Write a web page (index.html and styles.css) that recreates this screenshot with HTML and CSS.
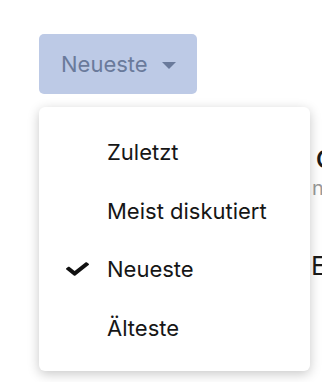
FILE: index.html
```html
<!DOCTYPE html>
<html lang="de">
<head>
    <meta charset="UTF-8">
    <meta name="viewport" content="width=device-width, initial-scale=1.0">
    <title>Sortierung</title>
    <link rel="stylesheet" href="styles.css">
</head>
<body>
    <div class="page">
        <button class="sort-button">
            <span>Neueste</span>
            <span class="caret"></span>
        </button>

        <!-- content behind the menu -->
        <div class="behind">
            <div class="behind-title">C</div>
            <div class="behind-sub">n</div>
            <div class="behind-next">E</div>
        </div>

        <ul class="sort-menu">
            <li class="sort-item"><span class="check"></span>Zuletzt</li>
            <li class="sort-item"><span class="check"></span>Meist diskutiert</li>
            <li class="sort-item selected">
                <span class="check">
                    <svg viewBox="0 0 512 512" width="23" height="18" preserveAspectRatio="none"><path d="M173.9 439.4l-166.4-166.4c-10-10-10-26.2 0-36.2l36.2-36.2c10-10 26.2-10 36.2 0L192 312.7 432.1 72.6c10-10 26.2-10 36.2 0l36.2 36.2c10 10 10 26.2 0 36.2l-294.4 294.4c-10 10-26.2 10-36.2 0z" fill="#111"/></svg>
                </span>Neueste
            </li>
            <li class="sort-item"><span class="check"></span>Älteste</li>
        </ul>
    </div>
</body>
</html>
```

FILE: styles.css
```css
body {
    margin: 0;
    background: #fff;
    font-family: Inter, "Noto Sans", sans-serif;
    overflow: hidden;
}

.page {
    position: relative;
    width: 322px;
    height: 382px;
    padding: 34px 0 0 39px;
    box-sizing: border-box;
}

.sort-button {
    display: flex;
    align-items: center;
    gap: 14px;
    height: 60px;
    padding: 0 21px 0 22px;
    border: none;
    border-radius: 5px;
    background: #bdcae6;
    color: #6a7a9b;
    font-family: inherit;
    font-size: 22px;
}
.caret {
    width: 0;
    height: 0;
    margin-top: 2px;
    border-left: 7px solid transparent;
    border-right: 7px solid transparent;
    border-top: 7px solid #6a7a9b;
}

/* Background content peeking out on the right */
.behind {
    margin: 52px 0 0 277px;
    white-space: nowrap;
    color: #1a1a1a;
}
.behind-title {
    font-size: 24px;
    font-weight: 600;
    line-height: 28px;
}
.behind-sub {
    margin-top: 2px;
    font-size: 20px;
    color: #9a9a9a;
    margin-left: -4px;
}
.behind-next {
    margin-top: 50px;
    font-size: 26px;
    margin-left: -5px;
}

.sort-menu {
    position: absolute;
    top: 107px;
    left: 39px;
    width: 271px;
    margin: 0;
    padding: 16px 0 14px;
    list-style: none;
    background: #fff;
    border-radius: 6px;
    box-shadow: 0 3px 12px rgba(0, 0, 0, 0.22);
}
.sort-item {
    display: flex;
    align-items: center;
    height: 58.5px;
    padding-left: 27px;
    font-size: 22px;
    color: #161616;
}
.check {
    display: flex;
    width: 23px;
    margin-right: 18px;
}
```
